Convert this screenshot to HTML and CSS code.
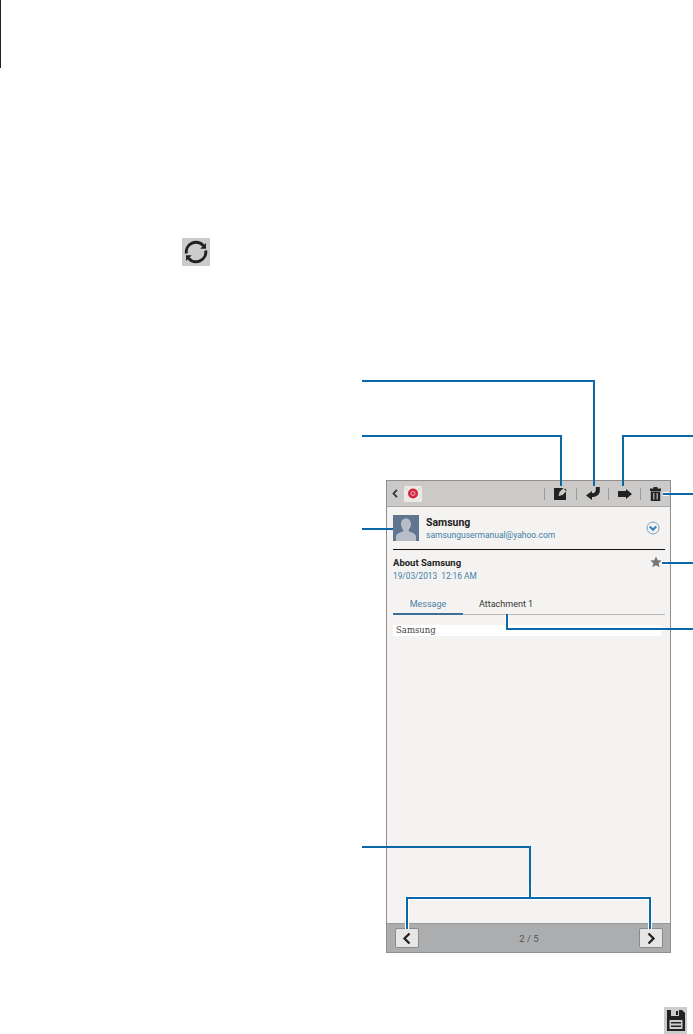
FILE: index.html
```html
<!doctype html>
<html lang="en">
<head>
	<meta charset="UTF-8">
	<title>Email</title>
	<link rel="stylesheet" href="styles.css">
</head>
<body>
<div class="page">
	<div class="spine"></div>

	<div class="key-icon sync">
		<svg width="28" height="28" viewBox="0 0 28 28">
			<path d="M4.300 15.500A9.800 9.800 0 0 1 21.500 7.800" fill="none" stroke="#222" stroke-width="3"/>
			<path d="M24 5v5.800h-5.800z" fill="#222"/>
			<path d="M23.700 12.500A9.800 9.800 0 0 1 6.500 20.200" fill="none" stroke="#222" stroke-width="3"/>
			<path d="M4 23v-5.800h5.800z" fill="#222"/>
		</svg>
	</div>

	<div class="phone">
		<div class="toolbar">
			<svg class="back" width="6" height="9" viewBox="0 0 6 9"><path d="M5 .8L1.500 4.500 5 8.200" fill="none" stroke="#333" stroke-width="1.800"/></svg>
			<div class="mail-icon">
				<svg width="18" height="16" viewBox="0 0 18 16">
					<path d="M0 0h18v16H0z" fill="#eceae4"/>
					<path d="M0 1l9 7 9-7" fill="none" stroke="#d8d4cc"/>
					<circle cx="9" cy="7.500" r="5" fill="#d8243c"/>
					<circle cx="9" cy="7.500" r="2" fill="none" stroke="#f3b9c1"/>
				</svg>
			</div>
			<div class="tools">
				<span class="tool-sep"></span>
				<svg class="tool" width="13" height="12" viewBox="0 0 13 12">
					<path d="M0 0h9.500L5.500 4 4.500 8l4-1 3.500-3.500V12H0z" fill="#222"/>
					<path d="M11 .5l1.700 1.700-.8.8-1.700-1.700z" fill="#222"/>
				</svg>
				<span class="tool-sep"></span>
				<svg class="tool tool-wide" width="14" height="13" viewBox="0 0 14 13">
					<path d="M0 8.500L6 4v2.300c2.500 0 3.800-1.300 3.800-3.300V0h4v3.500c0 4-3 6.500-7.800 6.500v3z" fill="#222"/>
				</svg>
				<span class="tool-sep"></span>
				<svg class="tool tool-wide" width="14" height="10" viewBox="0 0 14 10">
					<path d="M0 2h8V0l6 5-6 5V8H0z" fill="#222"/>
				</svg>
				<span class="tool-sep"></span>
				<svg class="tool" width="11" height="14" viewBox="0 0 11 14">
					<path d="M3.500 0h4v1.500H11v2.500H0V1.500h3.500zM.8 4.500h9.400V14H.8z" fill="#222"/>
					<path d="M3.800 6v6.500M7.200 6v6.500" stroke="#bbb" stroke-width="1.200"/>
				</svg>
			</div>
		</div>

		<div class="mail">
			<div class="sender">
				<svg class="avatar" width="26" height="26" viewBox="0 0 26 26">
					<path d="M0 0h26v26H0z" fill="#5f7590"/>
					<path d="M13 3.500c3.300 0 5 2.600 5 5.500 0 2.400-1 4.300-2.200 5.400v1.800c2 1 7.200 2 7.200 5.300V26H3v-4.500c0-3.300 5.200-4.300 7.200-5.300v-1.800C9 13.300 8 11.400 8 9c0-2.900 1.700-5.500 5-5.500z" fill="#b7bdc6"/>
				</svg>
				<div class="sender-text">
					<div class="sender-name">Samsung</div>
					<div class="sender-mail">samsungusermanual@yahoo.com</div>
				</div>
				<svg class="expand" width="14" height="14" viewBox="0 0 14 14">
					<circle cx="7" cy="7" r="6" fill="#f4f3f1" stroke="#7f9fba"/>
					<path d="M3.800 5.500L7 8.800l3.200-3.300" fill="none" stroke="#2f80c4" stroke-width="2"/>
				</svg>
			</div>

			<div class="subject">
				<div>
					<div class="subject-title">About Samsung</div>
					<div class="subject-date">19/03/2013 &nbsp;12:16 AM</div>
				</div>
				<svg class="star" width="12" height="12" viewBox="0 0 12 12">
					<path d="M6 .5l1.700 3.700 4 .4-3 2.700.9 4L6 9.200l-3.600 2.100.9-4-3-2.700 4-.4z" fill="#77777a"/>
				</svg>
			</div>

			<div class="tabs">
				<div class="tab tab-on">Message</div>
				<div class="tab">Attachment 1</div>
			</div>
			<div class="body-text">Samsung</div>
		</div>

		<div class="pager">
			<div class="page-btn">
				<svg width="10" height="13" viewBox="0 0 10 13"><path d="M7.500 1.500L2.500 6.500l5 5" fill="none" stroke="#222" stroke-width="2.300"/></svg>
			</div>
			<div class="page-count">2 / 5</div>
			<div class="page-btn">
				<svg width="10" height="13" viewBox="0 0 10 13"><path d="M2.500 1.500l5 5-5 5" fill="none" stroke="#222" stroke-width="2.300"/></svg>
			</div>
		</div>
	</div>

	<div class="key-icon save">
		<svg width="23" height="27" viewBox="0 0 23 27">
			<path d="M3 3h15l3 3v18H3z" fill="#222"/>
			<path d="M7 3h8v6H7z" fill="#ccc"/>
			<path d="M12 4h2v4h-2z" fill="#222"/>
			<path d="M5.500 13h13v9h-13z" fill="#ccc"/>
			<path d="M7 15.800h10M7 19.200h10" stroke="#222" stroke-width="1.500"/>
		</svg>
	</div>

	<!-- callout lines -->
	<svg class="callouts" width="693" height="1034" viewBox="0 0 693 1034">
		<g class="halo">
			<path d="M663 494h6M662 563h7M507 615v14h158M407 929v-31h243v31M530 885v13"/>
		</g>
		<g class="leader">
			<path d="M362 381h232v105"/>
			<path d="M362 436h199v50"/>
			<path d="M693 436h-70v50"/>
			<path d="M693 494h-30"/>
			<path d="M693 563h-31"/>
			<path d="M507 614v15h186"/>
			<path d="M362 529h31"/>
			<path d="M362 847h168v51"/>
			<path d="M407 929v-31h243v31"/>
		</g>
	</svg>
</div>
</body>
</html>
```

FILE: styles.css
```css
*{
	box-sizing:border-box;
}
body{
	margin:0;
	background-color:#fff;
	font-family:Roboto,"Liberation Sans",sans-serif;
}
.page{
	position:relative;
	width:693px;
	height:1034px;
	overflow:hidden;
}
.spine{
	width:1px;
	height:68px;
	background-color:#222;
}
.key-icon{
	background-color:#ccc;
}
.key-icon svg{
	display:block;
}
.sync{
	width:28px;
	height:28px;
	margin:170px 0 0 182px;
}
.save{
	width:23px;
	height:27px;
	margin:54px 0 0 664px;
}

/*phone*/
.phone{
	display:flex;
	flex-direction:column;
	width:285px;
	height:473px;
	margin:214px 0 0 386px;
	border:1px solid #8f8f8f;
	background-color:#f4f3f1;
}
.toolbar{
	display:flex;
	align-items:center;
	height:26px;
	padding:0 0 0 5px;
	background-color:#cbcac8;
	border-bottom:1px solid #a9a9a9;
}
.back{
	margin-right:6px;
}
.mail-icon{
	height:16px;
}
.mail-icon svg{
	display:block;
}
.tools{
	display:flex;
	align-items:center;
	margin-left:auto;
}
.tool{
	margin:0 9px;
}
.tool-wide{
	margin:0 8.500px;
}
.tool-sep{
	width:1px;
	height:12px;
	background-color:#9b9b9b;
}

/*mail*/
.mail{
	flex:1;
	padding:7px 5px 0 6px;
}
.sender{
	display:flex;
	align-items:center;
	height:27px;
}
.avatar{
	margin-right:7px;
}
.sender-text{
	padding-top:2px;
}
.sender-name{
	font-size:10.500px;
	font-weight:bold;
	line-height:13px;
	color:#222;
}
.sender-mail{
	font-size:8.500px;
	line-height:13px;
	color:#3e7fa8;
}
.expand{
	margin-left:auto;
	margin-right:5px;
}
.subject{
	display:flex;
	justify-content:space-between;
	margin-top:8px;
	padding:6px 3px 0 0;
	border-top:1px solid #111;
}
.subject-title{
	font-size:9.500px;
	font-weight:bold;
	line-height:13px;
	color:#222;
}
.subject-date{
	margin-top:1px;
	font-size:8.300px;
	line-height:13px;
	color:#3e7fa8;
}
.tabs{
	display:flex;
	height:18px;
	margin-top:14px;
	border-bottom:1px solid #bbb;
}
.tab{
	font-size:9px;
	line-height:14px;
	color:#333;
}
.tab-on{
	width:70px;
	height:18px;
	margin-right:16px;
	border-bottom:2px solid #3d6f96;
	text-align:center;
	color:#4a80a5;
}
.body-text{
	height:11px;
	width:268px;
	margin-top:10px;
	padding-left:3px;
	background-color:#fff;
	font-family:"DejaVu Serif",serif;
	font-size:8.500px;
	line-height:11px;
	color:#444;
}

/*pager*/
.pager{
	display:flex;
	align-items:center;
	justify-content:space-between;
	height:29px;
	padding:0 7px 0 8px;
	background-color:#acadae;
	border-top:1px solid #999;
}
.page-btn{
	display:flex;
	align-items:center;
	justify-content:center;
	width:24px;
	height:20px;
	background-color:#e6e6e4;
	border:1px solid #8a8a8a;
	border-radius:2px;
}
.page-count{
	font-size:9.500px;
	color:#555;
}

/*callouts*/
.callouts{
	position:absolute;
	top:0;
	left:0;
}
.callouts path{
	fill:none;
}
.halo path{
	stroke:#fff;
	stroke-width:4;
}
.leader path{
	stroke:#0a68a8;
	stroke-width:2;
}
```
